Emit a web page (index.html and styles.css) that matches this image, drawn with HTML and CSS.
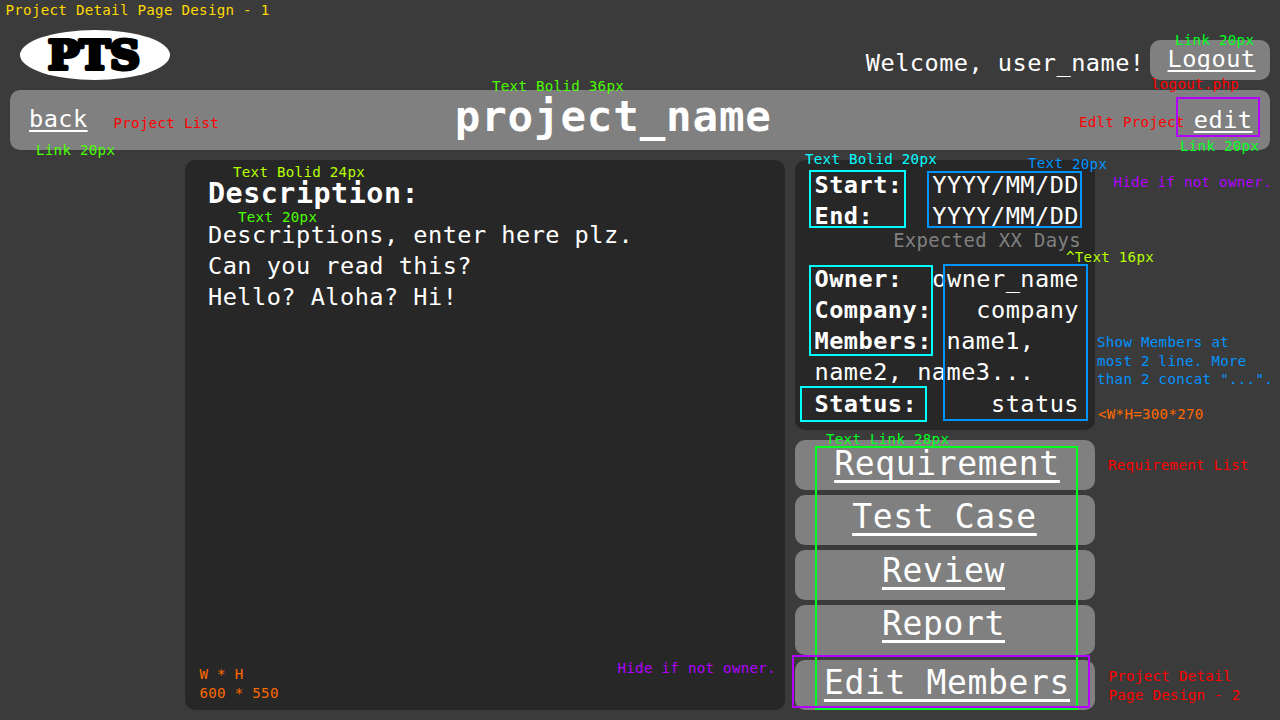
FILE: index.html
```html
<!DOCTYPE html>
<html lang="en">
<head>
<meta charset="utf-8">
<title>Project Detail Page Design - 1</title>
<link rel="stylesheet" href="styles.css">
</head>
<body>
<div class="page">
  <header class="header">
    <svg class="logo" width="150" height="50" viewBox="0 0 150 50">
      <ellipse cx="75" cy="25" rx="75" ry="25" fill="#fff"/>
      <text class="logo-text" x="28" y="39" textLength="92" lengthAdjust="spacingAndGlyphs">PTS</text>
    </svg>
    <div class="account">
      <span class="welcome">Welcome, user_name!</span>
      <div class="logout"><a class="link">Logout</a></div>
    </div>
  </header>
  <div class="titlebar">
    <a class="link back">back</a>
    <h1 class="title">project_name</h1>
    <a class="link edit">edit</a>
  </div>
  <main class="main">
    <section class="panel description">
      <h2 class="heading">Description:</h2>
      <p class="body">Descriptions, enter here plz.<br>Can you read this?<br>Hello? Aloha? Hi!</p>
    </section>
    <aside class="side">
      <section class="panel info">
        <div class="row"><b>Start:</b><span>YYYY/MM/DD</span></div>
        <div class="row"><b>End:</b><span>YYYY/MM/DD</span></div>
        <div class="expected">Expected XX Days</div>
        <div class="row"><b>Owner:</b><span>owner_name</span></div>
        <div class="row"><b>Company:</b><span>company</span></div>
        <div class="members"><b>Members:</b> name1,<br>name2, name3...</div>
        <div class="row status"><b>Status:</b><span>status</span></div>
      </section>
      <nav class="nav">
        <div class="button b1"><a>Requirement</a></div>
        <div class="button b2"><a>Test Case</a></div>
        <div class="button b3"><a>Review</a></div>
        <div class="button b4"><a>Report</a></div>
        <div class="button b5"><a>Edit Members</a></div>
      </nav>
    </aside>
  </main>

  <div class="box cyan box-dates"></div>
  <div class="box blue box-datevalues"></div>
  <div class="box cyan box-people"></div>
  <div class="box blue box-values"></div>
  <div class="box cyan box-status"></div>
  <div class="box green box-nav"></div>
  <div class="box purple box-members"></div>

  <div class="note yellow n-page">Project Detail Page Design - 1</div>
  <div class="note lime n-back">Link 20px</div>
  <div class="note red n-list">Project List</div>
  <div class="note lime n-title">Text Bolid 36px</div>
  <div class="note green n-logout">Link 20px</div>
  <div class="note red n-php">logout.php</div>
  <div class="note red n-project">Edlt Project</div>
  <div class="box purple box-edit"></div>
  <div class="note green n-edit">Link 20px</div>
  <div class="note cyan n-bold">Text Bolid 20px</div>
  <div class="note blue n-text">Text</div>
  <div class="note blue n-size">20px</div>
  <div class="note purple n-hide">Hide if not owner.</div>
  <div class="note chartreuse n-heading">Text Bolid 24px</div>
  <div class="note lime n-body">Text 20px</div>
  <div class="note chartreuse n-expected">^Text 16px</div>
  <div class="note blue n-show">Show Members at<br>most 2 line. More<br>than 2 concat "...".</div>
  <div class="note orange n-infosize">&lt;W*H=300*270</div>
  <div class="note red n-req">Requirement List</div>
  <div class="note green n-nav">Text Link 28px</div>
  <div class="note red n-next">Project Detail<br>Page Design - 2</div>
  <div class="note orange n-descsize">W * H<br>600 * 550</div>
  <div class="note purple n-hide2">Hide if not owner.</div>
</div>
</body>
</html>
```
FILE: styles.css
```css
* { box-sizing: border-box; margin: 0; padding: 0; letter-spacing: 0.0195em; }
body { background: #3b3b3b; overflow: hidden; }
.page {
  position: relative;
  width: 1280px;
  height: 720px;
  overflow: hidden;
  color: #fff;
  font-family: "DejaVu Sans Mono", monospace;
  font-size: 23.6px;
  line-height: 31px;
}
.header {
  height: 90px;
  padding: 30px 10px 0 20px;
  display: flex;
  justify-content: space-between;
  align-items: flex-start;
}
.logo { display: block; }
.logo-text {
  font-family: "DejaVu Serif", serif;
  font-weight: bold;
  font-size: 39.5px;
  letter-spacing: 0;
  stroke: #000;
  stroke-width: 4px;
  stroke-linejoin: round;
}
.account { display: flex; padding-top: 10px; }
.welcome { padding-top: 8px; margin-right: 5.5px; }
.logout {
  width: 120px;
  height: 40px;
  padding: 4px 0 0 17.5px;
  border-radius: 10px;
  background: #808080;
  line-height: 30px;
}
.link {
  text-decoration: underline;
  text-decoration-thickness: 2px;
  text-underline-offset: 3px;
  text-decoration-skip-ink: none;
}
.titlebar {
  height: 60px;
  margin: 0 10px;
  padding: 0 17.5px 0 19px;
  border-radius: 10px;
  background: #808080;
  display: flex;
  justify-content: space-between;
}
.back { padding-top: 14px; }
.edit { padding-top: 15px; }
.title { font-size: 42.5px; line-height: 54px; margin-right: 55px; }
.main { display: flex; gap: 10px; padding: 10px 0 0 185px; }
.panel { background: #272727; border-radius: 10px; }
.description { width: 600px; height: 550px; padding: 16px 23px; }
.heading { font-size: 28.3px; line-height: 36px; }
.body { padding-top: 8px; line-height: 31px; }
.side { width: 300px; }
.info { height: 270px; padding: 10px 16px 0 19.5px; }
.row { display: flex; justify-content: space-between; }
.expected {
  color: #808080;
  font-size: 18.9px;
  line-height: 17px;
  height: 32px;
  margin-right: -2px;
  text-align: right;
}
.status { padding-top: 1px; }
.nav { display: grid; gap: 5px; padding-top: 10px; }
.button {
  height: 50px;
  border-radius: 10px;
  background: #808080;
  font-size: 33px;
  text-align: center;
  text-decoration: underline;
  text-decoration-thickness: 2.5px;
  text-underline-offset: 5px;
  text-decoration-skip-ink: none;
}
.b1 { line-height: 47px; padding-left: 4px; }
.b2 { line-height: 43px; padding-right: 1px; }
.b3 { line-height: 41px; padding-right: 3px; }
.b4 { line-height: 37px; padding-right: 3px; }
.b5 { line-height: 45px; padding-left: 4px; }

/* Design annotations laid over the page */
.note {
  position: absolute;
  font-size: 14.17px;
  line-height: 19px;
  white-space: nowrap;
}
.box { position: absolute; border: 2px solid; }
.yellow { color: #ffd800; }
.lime { color: #4cff00; }
.green { color: #00ff21; }
.red { color: #ff0000; }
.cyan { color: #00ffff; }
.blue { color: #0094ff; }
.purple { color: #b200ff; }
.chartreuse { color: #b6ff00; }
.orange { color: #ff6a00; }

.box-dates { left: 809px; top: 170px; width: 97px; height: 58px; }
.box-datevalues { left: 927px; top: 171px; width: 155px; height: 57px; }
.box-people { left: 809px; top: 265px; width: 124px; height: 91px; }
.box-values { left: 943px; top: 264px; width: 145px; height: 157px; }
.box-status { left: 800px; top: 386px; width: 127px; height: 36px; }
.box-nav { left: 815px; top: 446px; width: 263px; height: 264px; }
.box-members { left: 792px; top: 655px; width: 298px; height: 53px; }
.box-edit { left: 1176px; top: 97px; width: 84px; height: 40px; }

.n-page { left: 5.5px; top: 1px; }
.n-back { left: 36px; top: 141px; }
.n-list { left: 113.5px; top: 114px; }
.n-title { left: 492px; top: 77px; }
.n-logout { left: 1175px; top: 31px; }
.n-php { left: 1151px; top: 75px; }
.n-project { left: 1079px; top: 113px; }
.n-edit { left: 1180px; top: 137px; }
.n-bold { left: 805px; top: 150px; }
.n-text { left: 1028px; top: 154px; }
.n-size { left: 1072px; top: 155px; }
.n-hide { left: 1113.5px; top: 173px; }
.n-heading { left: 233px; top: 163px; }
.n-body { left: 238px; top: 208px; }
.n-expected { left: 1066px; top: 248px; }
.n-show { left: 1097px; top: 333px; line-height: 18.6px; }
.n-infosize { left: 1098px; top: 405px; }
.n-req { left: 1108px; top: 456px; }
.n-nav { left: 826px; top: 430px; }
.n-next { left: 1108.5px; top: 667px; }
.n-descsize { left: 199.5px; top: 665px; }
.n-hide2 { left: 617.5px; top: 659px; }
```
